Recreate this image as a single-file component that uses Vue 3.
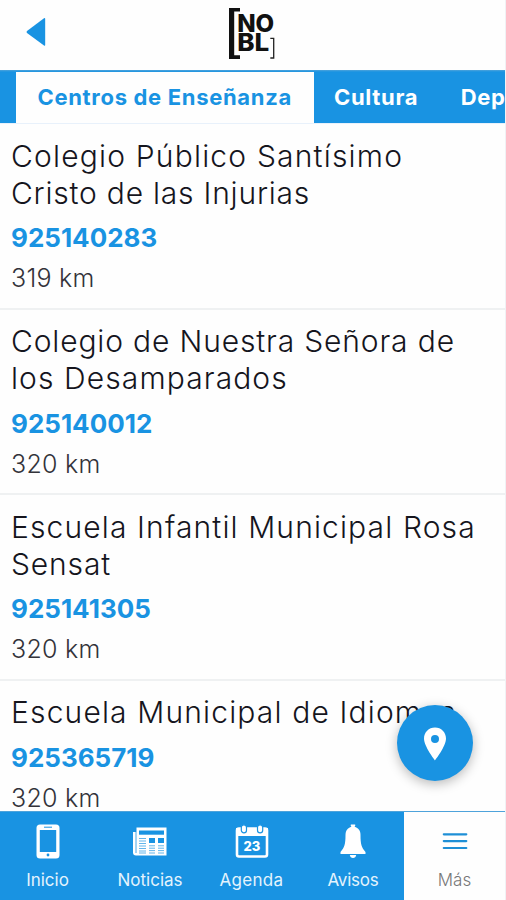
<script setup>
const tabs = [
  { label: 'Centros de Enseñanza', active: true },
  { label: 'Cultura' },
  { label: 'Deportes' },
]

const centers = [
  {
    lines: [{ text: 'Colegio Público Santísimo', tracking: 1.19 }, { text: 'Cristo de las Injurias', tracking: 0.78 }],
    phone: '925140283',
    distance: '319 km',
  },
  {
    lines: [{ text: 'Colegio de Nuestra Señora de', tracking: 0.85 }, { text: 'los Desamparados', tracking: 1.1 }],
    phone: '925140012',
    distance: '320 km',
  },
  {
    lines: [{ text: 'Escuela Infantil Municipal Rosa', tracking: 1.13 }, { text: 'Sensat', tracking: 0.85 }],
    phone: '925141305',
    distance: '320 km',
  },
  {
    lines: [{ text: 'Escuela Municipal de Idiomas', tracking: 1.15 }],
    phone: '925365719',
    distance: '320 km',
  },
]
</script>

<template>
  <div class="screen">
    <header class="header">
      <svg class="back" width="20" height="30" viewBox="0 0 20 30">
        <path d="M18 1.2 Q19.2 .6 19.2 2 V27.8 Q19.2 29.2 18 28.4 L1 15.9 Q0 15 1 14.1 Z" fill="#1993e2" />
      </svg>
      <svg class="logo" width="48" height="54" viewBox="0 0 48 54">
        <path d="M1 1 H12 V4.6 H6.2 V48.2 H12 V52 H1 Z" fill="#111" />
        <path d="M42.3 31.3 H45.7 V51 H42.3" fill="none" stroke="#222" stroke-width="1.3" />
        <text x="9.2" y="25" textLength="37" lengthAdjust="spacingAndGlyphs">NO</text>
        <text x="9.2" y="44.3" textLength="32" lengthAdjust="spacingAndGlyphs">BL</text>
      </svg>
    </header>

    <nav class="tabs">
      <div v-for="tab in tabs" :key="tab.label" class="tab" :class="{ active: tab.active }">{{ tab.label }}</div>
    </nav>

    <main class="list">
      <article v-for="center in centers" :key="center.phone" class="item">
        <h2 class="name">
          <span v-for="line in center.lines" :key="line.text" class="line" :style="{ letterSpacing: line.tracking + 'px' }">{{ line.text }}</span>
        </h2>
        <div class="phone">{{ center.phone }}</div>
        <div class="distance">{{ center.distance }}</div>
      </article>
    </main>

    <button class="fab">
      <svg width="24" height="34" viewBox="0 0 24 34">
        <path fill-rule="evenodd" d="M12 .5 C5.8 .5 1 5.3 1 11.6 C1 19.5 12 33.5 12 33.5 S23 19.5 23 11.6 C23 5.3 18.2 .5 12 .5 Z M12 8 a4 4 0 1 1 0 8 a4 4 0 1 1 0 -8 Z" fill="#fff" />
      </svg>
    </button>

    <footer class="bar">
      <div class="entry">
        <svg width="36" height="36" viewBox="0 0 36 36">
          <rect x="6.5" y="1.5" width="23" height="34" rx="3.5" fill="#fff" />
          <rect x="9.8" y="7" width="16.4" height="22" fill="#1993e2" />
          <path d="M14 4.2 H22" stroke="#1993e2" stroke-width="1" />
          <circle cx="18" cy="32" r="1.4" fill="#1993e2" />
        </svg>
        <span>Inicio</span>
      </div>
      <div class="entry">
        <svg width="36" height="36" viewBox="0 0 36 36">
          <path d="M4.5 4.5 H34.5 V32.5 H4 Q1 32.5 1 29.5 V9 H4.5 Z" fill="#fff" />
          <path d="M4 9 V30" stroke="#1993e2" stroke-width=".8" />
          <rect x="7" y="7.5" width="25" height="4.2" fill="#1993e2" />
          <rect x="17" y="15" width="6" height="5" fill="#1993e2" />
          <rect x="26" y="15" width="6" height="5" fill="#1993e2" />
          <path d="M7 15.5H14M7 18H14M7 20.5H14M7 23H14M7 25.5H14M7 28H14M7 30H14M17 22.8H23M17 25.2H23M17 27.6H23M17 30H23M26 22.8H32M26 25.2H32M26 27.6H32M26 30H32" stroke="#1993e2" stroke-width=".9" opacity=".75" />
        </svg>
        <span>Noticias</span>
      </div>
      <div class="entry agenda">
        <svg width="36" height="36" viewBox="0 0 36 36">
          <rect x="3" y="5.5" width="30" height="28" rx="2" fill="none" stroke="#fff" stroke-width="2.6" />
          <path d="M2 5 H34 V13 H2 Z" fill="#fff" />
          <rect x="7.3" y="1.8" width="5.2" height="8" rx="2.6" fill="#fff" stroke="#1993e2" stroke-width="1.2" />
          <rect x="23.5" y="1.8" width="5.2" height="8" rx="2.6" fill="#fff" stroke="#1993e2" stroke-width="1.2" />
          <text class="date" x="18" y="28.3" text-anchor="middle">23</text>
        </svg>
        <span>Agenda</span>
      </div>
      <div class="entry avisos">
        <svg width="36" height="36" viewBox="0 0 36 36">
          <path d="M16.5 3.8 C15.6 3 15.5 1.4 16 1.4 H20 C20.5 1.4 20.4 3 19.5 3.8 C23.5 4.8 25.5 8 25.5 12 C25.5 21 26.5 24.5 30.5 29 V31 H5.5 V29 C9.5 24.5 10.5 21 10.5 12 C10.5 8 12.5 4.8 16.5 3.8 Z" fill="#fff" />
          <path d="M14.8 32 H21.2 Q20.7 35 18 35 Q15.3 35 14.8 32 Z" fill="#fff" />
        </svg>
        <span>Avisos</span>
      </div>
      <div class="entry more">
        <svg width="36" height="36" viewBox="0 0 36 36">
          <path d="M6.8 11.3 H29.3 M6.8 18.1 H29.3 M6.8 25 H29.3" stroke="#1e8fd6" stroke-width="2.2" stroke-linecap="round" />
        </svg>
        <span>Más</span>
      </div>
    </footer>
  </div>
</template>

<style>
body {
  margin: 0;
  background: #fff;
}
</style>

<style scoped>
.screen {
  position: relative;
  box-sizing: border-box;
  width: 506px;
  height: 900px;
  display: flex;
  flex-direction: column;
  overflow: hidden;
  border-right: 1px solid #f0f2f5;
  background: #fefefe;
  font-family: Inter, "Open Sans", sans-serif;
}
.header {
  height: 70px;
  flex: none;
  display: flex;
  align-items: flex-start;
}
.back {
  margin: 17px 0 0 25.5px;
}
.logo {
  margin: 7px 0 0 182.5px;
}
.logo text {
  font-size: 24px;
  font-weight: 800;
  fill: #111;
}
.tabs {
  box-sizing: border-box;
  height: 54px;
  flex: none;
  display: flex;
  padding: 2px 0 1px 16px;
  background: linear-gradient(#4ea3db 0, #1993e2 2px, #1993e2 53px, #e8f1fb 53px);
  overflow: hidden;
}
.tab {
  flex: none;
  padding: 0 21.5px;
  font-size: 22px;
  font-weight: 700;
  letter-spacing: 0.68px;
  line-height: 50px;
  color: #fff;
  white-space: nowrap;
}
.tab.active {
  width: 254.5px;
  background: #fefefe;
  color: #1993e2;
}
.tab:not(.active) {
  padding: 0 22px 0 20.5px;
}
.list {
  flex: 1;
  min-height: 0;
  overflow: hidden;
}
.item {
  box-sizing: border-box;
  height: 185.6px;
  padding: 13.5px 0 0 11px;
  border-bottom: 2px solid #eff1f2;
}
.name {
  margin: 0;
  font-size: 30px;
  font-weight: 300;
  line-height: 37px;
  color: #15151d;
}
.line {
  display: block;
  white-space: nowrap;
}
.phone {
  margin-top: 5.5px;
  font-size: 26px;
  font-weight: 700;
  line-height: 41px;
  color: #1993e2;
  height: 41px;
}
.distance {
  font-size: 25px;
  font-weight: 300;
  letter-spacing: 0.25px;
  line-height: 41px;
  color: #33333a;
}
.fab {
  position: absolute;
  left: 397px;
  top: 705px;
  width: 76px;
  height: 76px;
  padding: 2px 0 0;
  border: 0;
  border-radius: 50%;
  display: flex;
  align-items: center;
  justify-content: center;
  background: #1993e2;
  box-shadow: 0 3px 12px rgba(0, 0, 0, 0.28);
}
.bar {
  box-sizing: border-box;
  height: 89px;
  flex: none;
  display: grid;
  grid-template-columns: 99px 102px 101px 102px 101px;
  border-top: 1.5px solid #4ea3db;
  background: #1993e2;
}
.entry {
  display: flex;
  flex-direction: column;
  align-items: center;
  padding-top: 11px;
  font-size: 17px;
  line-height: 22px;
  color: #e4f3fd;
}
.entry:first-child {
  padding-right: 4px;
}
.entry svg {
  flex: none;
}
.entry span {
  margin-top: 10px;
}
.agenda span {
  letter-spacing: 0.3px;
}
.avisos span {
  letter-spacing: -0.2px;
}
.more {
  background: #fefefe;
  color: #777;
  font-weight: 300;
}
.date {
  font-size: 13px;
  font-weight: 800;
  fill: #fff;
}
</style>
